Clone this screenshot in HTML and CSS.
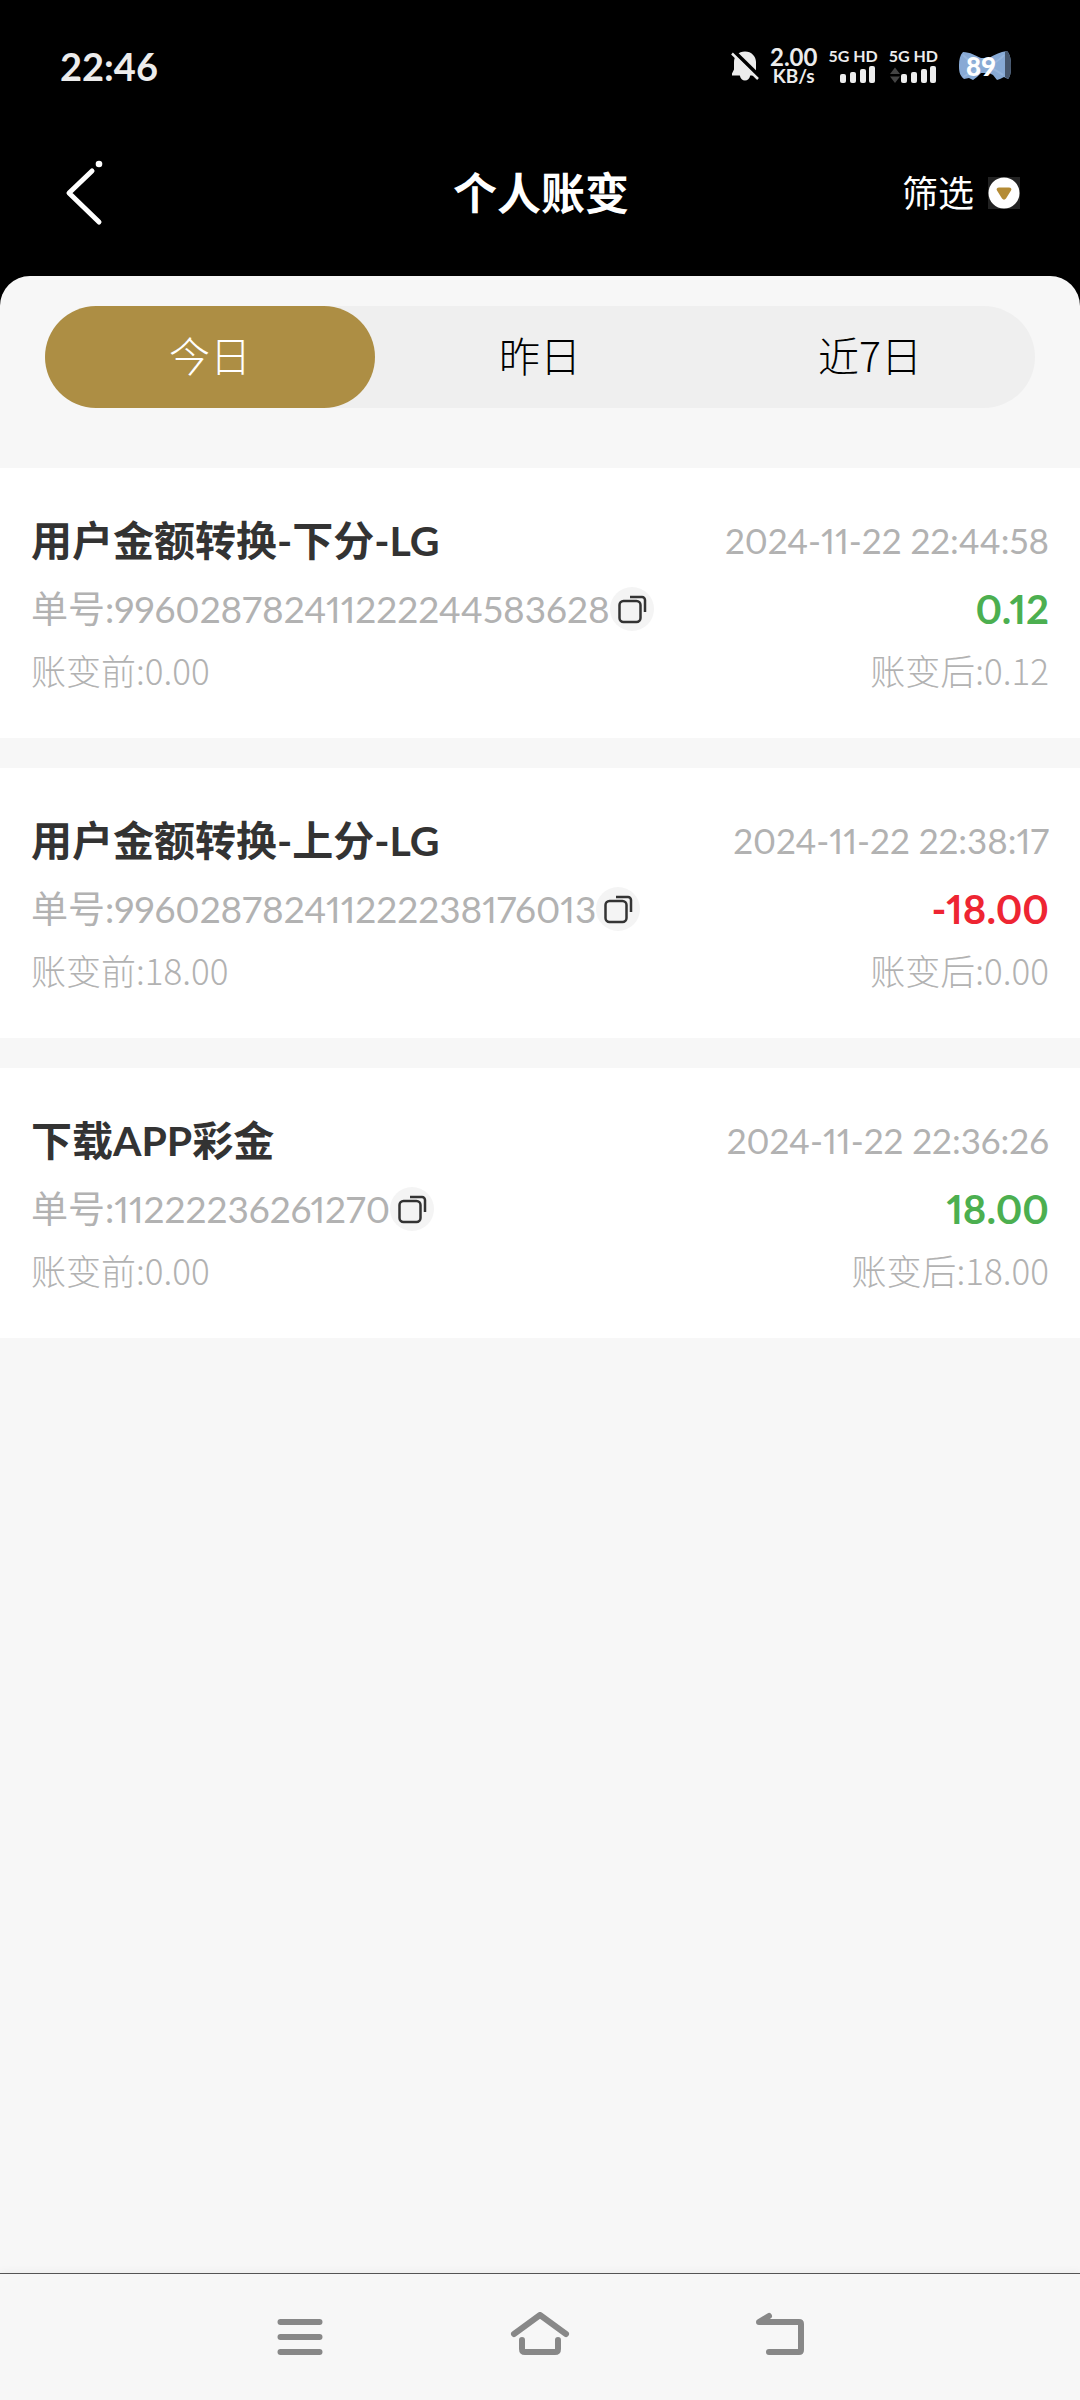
FILE: index.html
```html
<!DOCTYPE html>
<html lang="zh-CN">
<head>
<meta charset="utf-8">
<meta name="viewport" content="width=device-width, initial-scale=1">
<title>个人账变</title>
<link rel="stylesheet" href="styles.css">
</head>
<body>
<div class="status-bar">
  <span class="clock">22:46</span>
  <div class="status-icons">
    <svg class="bell" viewBox="0 0 28 32" aria-hidden="true">
      <path d="M14 1.500C7.500 1.500 3 6.500 3 12v7.500L1 23.500v2h7.800c.8 3.500 2.600 5 5.200 5s4.500-1.500 5.200-5H25V12C25 6.500 20.500 1.500 14 1.500Z" fill="#ececec"/>
      <path d="M2 .5 29 27" stroke="#000" stroke-width="4"/>
      <path d="M1 3.500 27 29" stroke="#ececec" stroke-width="2.500"/>
    </svg>
    <div class="net-speed"><span class="speed-value">2.00</span><span class="speed-unit">KB/s</span></div>
    <div class="sim">
      <span class="sim-label">5G HD</span>
      <svg class="bars" viewBox="0 0 48 18" aria-hidden="true"><g fill="#ececec"><rect x="12" y="8" width="6" height="9" rx="2"/><rect x="22" y="6" width="6" height="11" rx="2"/><rect x="32" y="3" width="6" height="14" rx="2"/><rect x="41" y="0" width="6" height="17" rx="2"/></g></svg>
    </div>
    <div class="sim">
      <span class="sim-label">5G HD</span>
      <svg class="bars" viewBox="0 0 48 18" aria-hidden="true"><path d="M1 8 6 1.500 11 8ZM1 10.500 6 17l5-6.500Z" fill="#444"/><g fill="#ececec"><rect x="12" y="8" width="6" height="9" rx="2"/><rect x="22" y="6" width="6" height="11" rx="2"/><rect x="32" y="3" width="6" height="14" rx="2"/><rect x="41" y="0" width="6" height="17" rx="2"/></g></svg>
    </div>
    <div class="battery">
      <svg class="bow" viewBox="0 0 54 32" aria-hidden="true">
        <path d="M5 2C12 2 18 6 23 8h8C36 5 42 2 49 1c3 3 4 8 4 15s-1 11-3 13l-4-2-4 2-3 1-4-5-4-2h-8l-4 4-4 3-4-2-5 1C1 25 1 20 1 15S2 5 5 2Z" fill="#88aad5"/>
        <path d="M47 1.500 49 1c3 3 4 8 4 15s-1 11-3 13l-3-2Z" fill="#46566c"/>
        <path d="M5 5c5 5 8 8 16 10M5 27c5-3 10-6 15-7M46 5c-4 5-8 7-12 9M45 25c-4-3-7-5-11-6" stroke="#96b5dc" stroke-width="2" fill="none"/>
      </svg>
      <span class="battery-level">89</span>
    </div>
  </div>
</div>

<header class="header">
  <button class="back" type="button" aria-label="返回">
    <svg viewBox="0 0 44 66" aria-hidden="true"><path d="M30 11 7 33l30 29" fill="none" stroke="#fff" stroke-width="5" stroke-linecap="round" stroke-linejoin="round"/><circle cx="37" cy="4" r="3.300" fill="#fff"/></svg>
  </button>
  <h1 class="title">个人账变</h1>
  <button class="filter" type="button"><span class="filter-label">筛选</span>
    <svg viewBox="0 0 32 32" aria-hidden="true"><rect width="32" height="32" fill="#222"/><circle cx="16" cy="16" r="15.500" fill="#fff"/><path d="M11 10.500h10c2 0 3 1.500 2 3l-5 8c-1 1.500-3 1.500-4 0l-5-8c-1-1.500 0-3 2-3Z" fill="#b48b35"/></svg>
  </button>
</header>

<main class="sheet">
  <div class="tabs">
    <button class="tab active" type="button">今日</button>
    <button class="tab" type="button">昨日</button>
    <button class="tab" type="button">近7日</button>
  </div>

  <section class="records">
    <article class="record">
      <div class="row head"><h2 class="name">用户金额转换-下分-LG</h2><time class="time">2024-11-22 22:44:58</time></div>
      <div class="row order"><span class="number">单号:996028782411222244583628</span><button class="copy" type="button" aria-label="复制"><svg viewBox="0 0 44 44" aria-hidden="true"><rect x="9.500" y="14" width="21" height="21" rx="4"/><path d="M20 10h12a3 3 0 0 1 3 3v12"/></svg></button><span class="amount gain">0.12</span></div>
      <div class="row balance"><span>账变前:0.00</span><span>账变后:0.12</span></div>
    </article>
    <article class="record">
      <div class="row head"><h2 class="name">用户金额转换-上分-LG</h2><time class="time">2024-11-22 22:38:17</time></div>
      <div class="row order"><span class="number">单号:996028782411222238176013</span><button class="copy" type="button" aria-label="复制"><svg viewBox="0 0 44 44" aria-hidden="true"><rect x="9.500" y="14" width="21" height="21" rx="4"/><path d="M20 10h12a3 3 0 0 1 3 3v12"/></svg></button><span class="amount loss">-18.00</span></div>
      <div class="row balance"><span>账变前:18.00</span><span>账变后:0.00</span></div>
    </article>
    <article class="record">
      <div class="row head"><h2 class="name">下载APP彩金</h2><time class="time">2024-11-22 22:36:26</time></div>
      <div class="row order"><span class="number">单号:11222236261270</span><button class="copy" type="button" aria-label="复制"><svg viewBox="0 0 44 44" aria-hidden="true"><rect x="9.500" y="14" width="21" height="21" rx="4"/><path d="M20 10h12a3 3 0 0 1 3 3v12"/></svg></button><span class="amount gain">18.00</span></div>
      <div class="row balance"><span>账变前:0.00</span><span>账变后:18.00</span></div>
    </article>
  </section>
</main>

<nav class="system-nav">
  <button class="recents" type="button" aria-label="最近任务"><svg viewBox="0 0 60 50" aria-hidden="true"><path d="M10.500 10h39M10.500 25h39M10.500 40h39"/></svg></button>
  <button type="button" aria-label="主屏幕"><svg viewBox="0 0 60 50" aria-hidden="true"><path d="M4 22 30 3l26 19M12 28v9q0 3 3 3h30q3 0 3-3v-9"/></svg></button>
  <button type="button" aria-label="返回上一级"><svg viewBox="0 0 60 50" aria-hidden="true"><path d="M19 40h30q2 0 2-2V12q0-2-2-2H9l10-6"/></svg></button>
</nav>
</body>
</html>
```
FILE: styles.css
```css
* {
  box-sizing: border-box;
}

body {
  margin: 0;
  min-height: 100vh;
  display: flex;
  flex-direction: column;
  background: #000;
  color: #000;
  font-family: Lato, "Noto Sans CJK SC", sans-serif;
}

button {
  margin: 0;
  padding: 0;
  border: 0;
  background: none;
  color: inherit;
  font: inherit;
}

svg {
  display: block;
}

/* Status bar */
.status-bar {
  display: flex;
  justify-content: space-between;
  align-items: center;
  height: 110px;
  padding: 22px 68px 0 60px;
  color: #ececec;
  font-weight: 700;
}

.clock {
  font-size: 38px;
}

.status-icons {
  display: flex;
  align-items: center;
  gap: 11px;
}

.bell {
  width: 28px;
  height: 32px;
}

.net-speed {
  display: flex;
  flex-direction: column;
  align-items: center;
}

.speed-value {
  font-size: 24px;
  line-height: 20px;
}

.speed-unit {
  font-size: 19px;
  line-height: 18px;
}

.sim {
  display: flex;
  flex-direction: column;
  gap: 2px;
}

.sim-label {
  font-size: 16px;
  line-height: 16px;
}

.bars {
  width: 48px;
  height: 18px;
}

.battery {
  position: relative;
  margin-left: 9px;
}

.bow {
  width: 54px;
  height: 32px;
}

.battery-level {
  position: absolute;
  top: 0;
  left: 8px;
  color: #fff;
  font-size: 26px;
  font-weight: 900;
  line-height: 32px;
}

/* Page header */
.header {
  display: grid;
  grid-template-columns: 1fr auto 1fr;
  align-items: center;
  height: 166px;
  padding: 0 60px 0 62px;
  color: #fff;
}

.back svg {
  width: 44px;
  height: 66px;
}

.title {
  margin: 0;
  font-size: 44px;
  font-weight: 700;
  line-height: 60px;
}

.filter {
  display: flex;
  justify-content: flex-end;
  align-items: center;
  gap: 14px;
  font-size: 36px;
}

.filter-label {
  padding-bottom: 4px;
}

.filter svg {
  width: 32px;
  height: 32px;
}

/* Content sheet */
.sheet {
  flex: 1;
  padding-top: 30px;
  border-radius: 30px 30px 0 0;
  background: #f7f7f7;
}

.tabs {
  display: grid;
  grid-template-columns: repeat(3, 1fr);
  margin: 0 45px 60px;
  border-radius: 51px;
  background: #efefef;
}

.tab {
  height: 102px;
  padding-bottom: 6px;
  border-radius: 51px;
  font-family: "Noto Sans CJK SC", sans-serif;
  font-size: 41px;
  font-weight: 300;
}

.tab.active {
  background: #ad8e44;
  color: #fff;
}

/* Balance records */
.records {
  display: flex;
  flex-direction: column;
  gap: 30px;
}

.record {
  padding: 36px 31px 38px;
  background: #fff;
  color: #b2b2b2;
  font-variant-numeric: proportional-nums;
}

.row {
  display: flex;
  justify-content: space-between;
  align-items: center;
}

.head {
  height: 72px;
}

.name {
  margin: 0;
  padding-bottom: 4px;
  color: #333;
  font-size: 41px;
  font-weight: 700;
}

.time {
  font-size: 35px;
}

.order {
  height: 66px;
  font-size: 37px;
}

.number {
  padding-bottom: 4px;
}

.copy {
  border-radius: 50%;
  background: #f4f4f4;
}

.copy svg {
  width: 44px;
  height: 44px;
  fill: none;
  stroke: #333;
  stroke-width: 2.5;
}

.amount {
  margin-left: auto;
  font-weight: 700;
  font-size: 40px;
}

.gain {
  color: #4caf50;
}

.loss {
  color: #ee2532;
}

.balance {
  height: 58px;
  padding-bottom: 4px;
  font-family: "Noto Sans CJK SC", sans-serif;
  font-size: 35px;
  font-weight: 300;
}

/* System navigation */
.system-nav {
  display: grid;
  grid-template-columns: 3fr 4fr 4fr 4fr 3fr;
  height: 127px;
  border-top: 1px solid #555;
  background: #f7f7f7;
  box-shadow: 0 -2px 8px rgba(0, 0, 0, 0.04);
}

.system-nav button {
  display: grid;
  place-items: center;
}

.system-nav .recents {
  grid-column: 2;
}

.system-nav svg {
  width: 60px;
  height: 50px;
  fill: none;
  stroke: #888;
  stroke-width: 6;
  stroke-linecap: round;
  stroke-linejoin: round;
}
```
